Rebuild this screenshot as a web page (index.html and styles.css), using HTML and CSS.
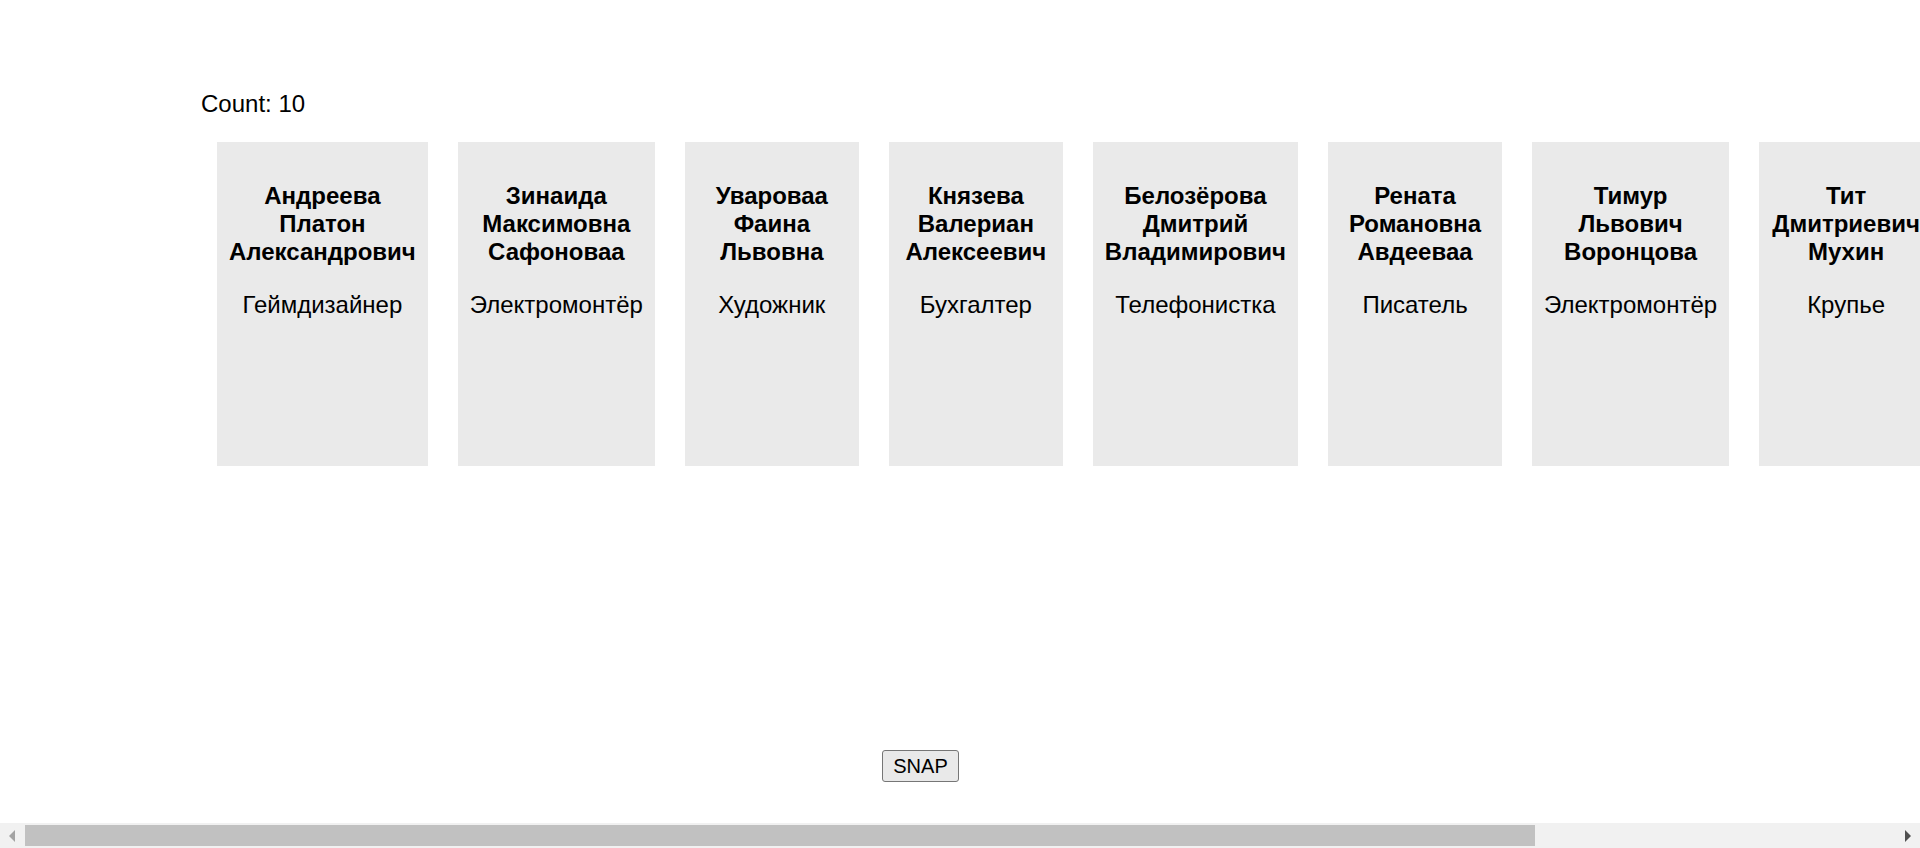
FILE: index.html
```html
<!DOCTYPE html>
<html lang="ru">
<head>
<meta charset="utf-8">
<title>Count</title>
<link rel="stylesheet" href="styles.css">
</head>
<body>
<div class="page">
  <div class="count">Count: 10</div>
  <div class="row">
    <div class="card"><div class="name">Андреева Платон Александрович</div><div class="job">Геймдизайнер</div></div>
    <div class="card"><div class="name">Зинаида Максимовна Сафоноваа</div><div class="job">Электромонтёр</div></div>
    <div class="card"><div class="name">Увароваа Фаина Львовна</div><div class="job">Художник</div></div>
    <div class="card"><div class="name">Князева Валериан Алексеевич</div><div class="job">Бухгалтер</div></div>
    <div class="card"><div class="name">Белозёрова Дмитрий Владимирович</div><div class="job">Телефонистка</div></div>
    <div class="card"><div class="name">Рената Романовна Авдееваа</div><div class="job">Писатель</div></div>
    <div class="card"><div class="name">Тимур Львович Воронцова</div><div class="job">Электромонтёр</div></div>
    <div class="card"><div class="name">Тит Дмитриевич Мухин</div><div class="job">Крупье</div></div>
    <div class="card"><div class="name">Галина Петровна Соколова</div><div class="job">Менеджер</div></div>
    <div class="card"><div class="name">Олег Игоревич Кузнецов</div><div class="job">Повар</div></div>
  </div>
  <div class="footer"><button class="snap" type="button">SNAP</button></div>
</div>
<div class="hscroll" aria-hidden="true">
  <div class="sb-btn sb-left"><span class="arrow-left"></span></div>
  <div class="sb-track"><div class="sb-thumb"></div></div>
  <div class="sb-btn sb-right"><span class="arrow-right"></span></div>
</div>
</body>
</html>
```
FILE: styles.css
```css
html, body {
  margin: 0;
  padding: 0;
  background: #ffffff;
}
body {
  font-family: "Liberation Sans", Arial, sans-serif;
  font-size: 24px;
  color: #000000;
}
.page {
  padding: 90px 0 0 201px;
  width: max-content;
}
.count {
  line-height: normal;
}
.row {
  display: flex;
  gap: 30px;
  margin: 24px 0 0 16px;
  padding-right: 37px;
}
.card {
  flex: 0 0 auto;
  width: min-content;
  min-width: 150px;
  height: 284px;
  padding: 40px 12px 0;
  background: #eaeaea;
  text-align: center;
}
.name {
  font-weight: bold;
}
.job {
  margin-top: 25px;
}
.footer {
  width: 1841px;
  margin-left: -201px;
  margin-top: 284px;
  text-align: center;
}
.snap {
  font-family: "Liberation Sans", Arial, sans-serif;
  font-size: 20px;
  line-height: 24px;
  padding: 3px 10px;
  border: 1px solid #767676;
  border-radius: 3px;
  background: #e9e9e9;
  color: #000000;
}
.hscroll {
  position: fixed;
  left: 0;
  bottom: 0;
  width: 100vw;
  height: 25px;
  display: flex;
  background: #f1f1f1;
}
.sb-btn {
  flex: 0 0 25px;
  display: flex;
  align-items: center;
}
.sb-left {
  justify-content: flex-start;
  padding-left: 9px;
  box-sizing: border-box;
}
.sb-right {
  justify-content: flex-start;
  padding-left: 10px;
  box-sizing: border-box;
}
.arrow-left {
  width: 0;
  height: 0;
  border-top: 6px solid transparent;
  border-bottom: 6px solid transparent;
  border-right: 6px solid #a3a3a3;
}
.arrow-right {
  width: 0;
  height: 0;
  border-top: 6px solid transparent;
  border-bottom: 6px solid transparent;
  border-left: 6px solid #505050;
}
.sb-track {
  flex: 1 1 auto;
  padding: 2px 0;
  box-sizing: border-box;
}
.sb-thumb {
  width: 1510px;
  height: 21px;
  background: #c1c1c1;
}
```
